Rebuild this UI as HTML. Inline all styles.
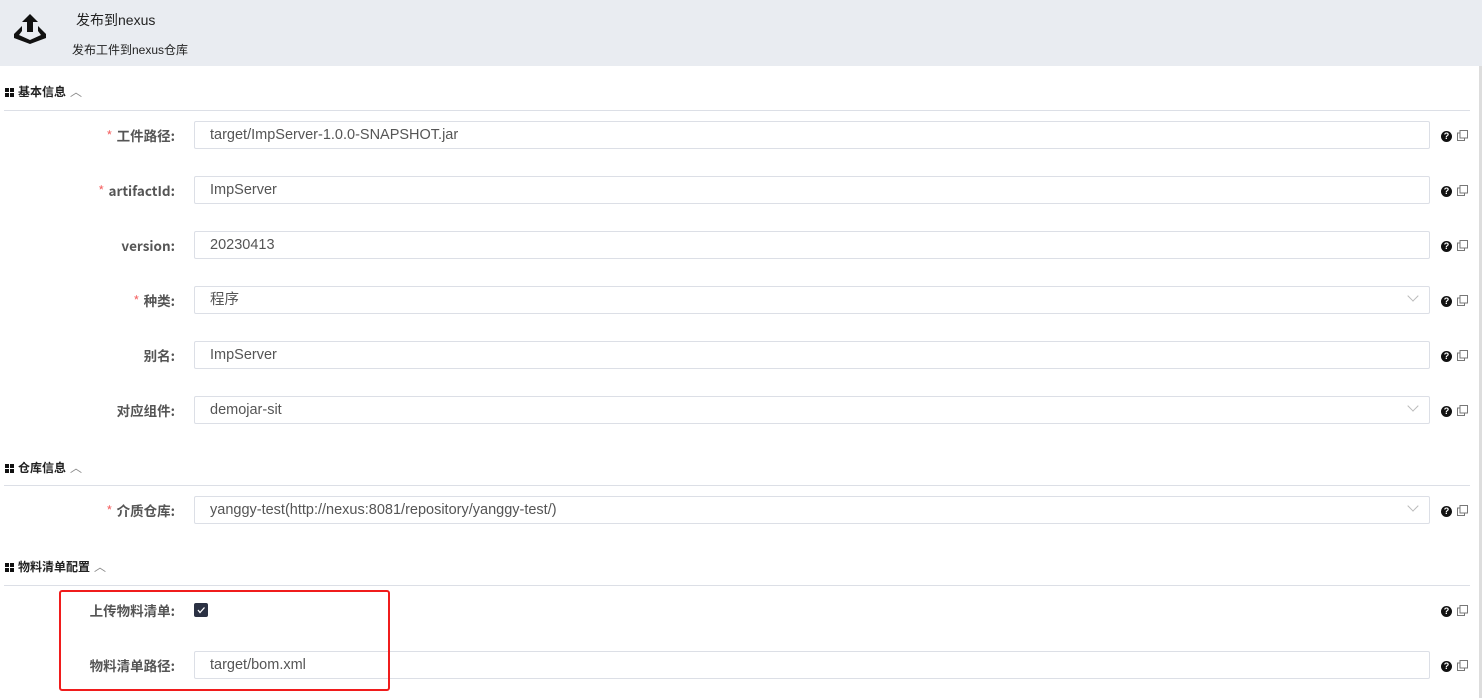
<!DOCTYPE html><html><head><meta charset="utf-8"><style>
*{box-sizing:border-box;margin:0;padding:0}
body{width:1482px;height:698px;overflow:hidden;background:#fff;font-family:"Liberation Sans","Noto Sans CJK SC",sans-serif;color:#333;position:relative}
.hd{position:absolute;left:0;top:0;width:1482px;height:66px;background:#e9ecf1}
.t1{position:absolute;left:76px;top:10px;font-size:14px;color:#222}
.t2{position:absolute;left:72px;top:41px;font-size:12px;color:#222}
.sb{position:absolute;left:1479px;top:66px;width:3px;height:632px;background:#ddd}
.sec{position:absolute;left:5px;font-size:12px;font-weight:bold;color:#222}
.sec i{display:inline-block;width:9px;height:9px;margin-right:4px;background:
linear-gradient(#fff,#fff) 4px 0/1px 9px no-repeat,linear-gradient(#fff,#fff) 0 4px/9px 1px no-repeat,#111;vertical-align:-1px}
.sec span{font-weight:normal;color:#888;margin-left:4px}
.line{position:absolute;left:4px;width:1466px;height:1px;background:#dcdfe6}
.lb{position:absolute;right:1307px;font-size:13.5px;font-weight:bold;color:#555;white-space:nowrap;height:20px;line-height:20px;font-family:"Noto Sans CJK SC","Liberation Sans",sans-serif}
.lb b{color:#f56c6c;font-weight:normal;margin-right:4px}
.in{position:absolute;left:194px;width:1236px;height:28px;border:1px solid #dcdfe6;border-radius:2px;font-size:14.5px;color:#555;padding:0 15px;line-height:27px}
.ar{position:absolute;right:12px;top:5px;width:8px;height:8px;border-right:1px solid #bbb;border-bottom:1px solid #bbb;transform:rotate(45deg)}
.q{position:absolute;left:1441px;width:11px;height:11px;border-radius:50%;background:#111;color:#fff;font-size:9px;font-weight:bold;text-align:center;line-height:11px}
.c{position:absolute;left:1457px;width:11px;height:11px}
.cb{position:absolute;left:194px;top:603px;width:14px;height:14px;background:#2b3143;border-radius:2px}
.red{position:absolute;left:59px;top:590px;width:331px;height:101px;border:2px solid #f01c1c;border-radius:3px}
</style></head><body>
<div class="hd">
<svg style="position:absolute;left:13px;top:13px" width="34" height="32" viewBox="0 0 34 32"><path d="M17 1 L9 9 H14 V19 H20 V9 H25 Z" fill="#111"/><path d="M9 13 L1 21 L1 25 L17 31 L33 25 L33 21 L25 13 V18 L28 22 L17 27 L6 22 L9 18 Z" fill="#111"/></svg>
<div class="t1">发布到nexus</div><div class="t2">发布工件到nexus仓库</div></div>
<div class="sb"></div>
<div class="sec" style="top:83px"><i></i>基本信息<span>︿</span></div><div class="line" style="top:110px"></div>
<div class="sec" style="top:459px"><i></i>仓库信息<span>︿</span></div><div class="line" style="top:485px"></div>
<div class="sec" style="top:558px"><i></i>物料清单配置<span>︿</span></div><div class="line" style="top:585px"></div>

<div class="lb" style="top:125px"><b>*</b>工件路径:</div><div class="in" style="top:121px">target/ImpServer-1.0.0-SNAPSHOT.jar</div>
<div class="lb" style="top:180px"><b>*</b>artifactId:</div><div class="in" style="top:176px">ImpServer</div>
<div class="lb" style="top:235px">version:</div><div class="in" style="top:231px">20230413</div>
<div class="lb" style="top:290px"><b>*</b>种类:</div><div class="in" style="top:286px">程序<span class="ar"></span></div>
<div class="lb" style="top:345px">别名:</div><div class="in" style="top:341px">ImpServer</div>
<div class="lb" style="top:400px">对应组件:</div><div class="in" style="top:396px">demojar-sit<span class="ar"></span></div>
<div class="lb" style="top:500px"><b>*</b>介质仓库:</div><div class="in" style="top:496px">yanggy-test(http://nexus:8081/repository/yanggy-test/)<span class="ar"></span></div>
<div class="lb" style="top:600px">上传物料清单:</div><div class="cb"><svg width="14" height="14"><path d="M4 7 L6 9.5 L10.5 4.5" stroke="#fff" stroke-width="1.3" fill="none"/></svg></div>
<div class="lb" style="top:655px">物料清单路径:</div><div class="in" style="top:651px">target/bom.xml</div>
<div class="red"></div>

<div class="q" style="top:131px">?</div><div class="q" style="top:186px">?</div><div class="q" style="top:241px">?</div><div class="q" style="top:296px">?</div><div class="q" style="top:351px">?</div><div class="q" style="top:406px">?</div><div class="q" style="top:506px">?</div><div class="q" style="top:606px">?</div><div class="q" style="top:661px">?</div>
<svg class="c" style="top:130px" viewBox="0 0 11 11"><rect x="0.5" y="3" width="7" height="7.5" fill="none" stroke="#777"/><rect x="3" y="0.5" width="7.5" height="7.5" fill="#fff" stroke="#777"/></svg>
<svg class="c" style="top:185px" viewBox="0 0 11 11"><rect x="0.5" y="3" width="7" height="7.5" fill="none" stroke="#777"/><rect x="3" y="0.5" width="7.5" height="7.5" fill="#fff" stroke="#777"/></svg>
<svg class="c" style="top:240px" viewBox="0 0 11 11"><rect x="0.5" y="3" width="7" height="7.5" fill="none" stroke="#777"/><rect x="3" y="0.5" width="7.5" height="7.5" fill="#fff" stroke="#777"/></svg>
<svg class="c" style="top:295px" viewBox="0 0 11 11"><rect x="0.5" y="3" width="7" height="7.5" fill="none" stroke="#777"/><rect x="3" y="0.5" width="7.5" height="7.5" fill="#fff" stroke="#777"/></svg>
<svg class="c" style="top:350px" viewBox="0 0 11 11"><rect x="0.5" y="3" width="7" height="7.5" fill="none" stroke="#777"/><rect x="3" y="0.5" width="7.5" height="7.5" fill="#fff" stroke="#777"/></svg>
<svg class="c" style="top:405px" viewBox="0 0 11 11"><rect x="0.5" y="3" width="7" height="7.5" fill="none" stroke="#777"/><rect x="3" y="0.5" width="7.5" height="7.5" fill="#fff" stroke="#777"/></svg>
<svg class="c" style="top:505px" viewBox="0 0 11 11"><rect x="0.5" y="3" width="7" height="7.5" fill="none" stroke="#777"/><rect x="3" y="0.5" width="7.5" height="7.5" fill="#fff" stroke="#777"/></svg>
<svg class="c" style="top:605px" viewBox="0 0 11 11"><rect x="0.5" y="3" width="7" height="7.5" fill="none" stroke="#777"/><rect x="3" y="0.5" width="7.5" height="7.5" fill="#fff" stroke="#777"/></svg>
<svg class="c" style="top:660px" viewBox="0 0 11 11"><rect x="0.5" y="3" width="7" height="7.5" fill="none" stroke="#777"/><rect x="3" y="0.5" width="7.5" height="7.5" fill="#fff" stroke="#777"/></svg>
</body></html>
